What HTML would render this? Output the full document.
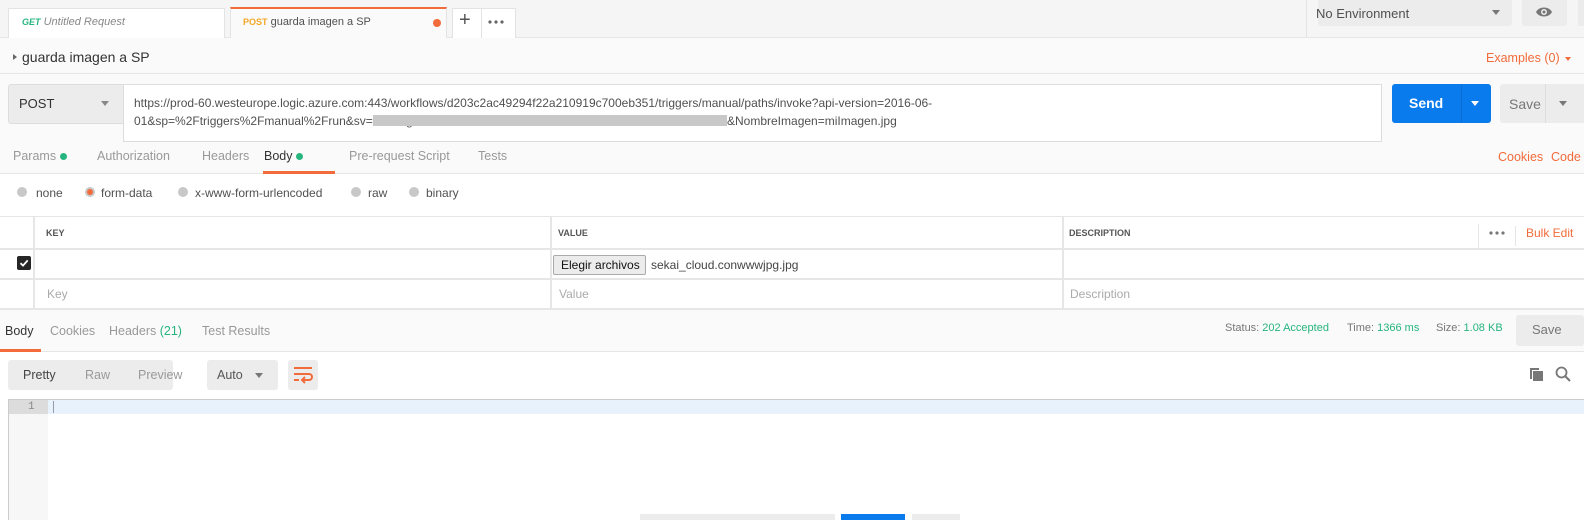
<!DOCTYPE html>
<html><head><meta charset="utf-8"><style>
*{box-sizing:border-box;margin:0;padding:0}
body{width:1584px;height:520px;overflow:hidden;background:#fff;font-family:"Liberation Sans",sans-serif;font-size:12px;color:#505050;position:relative}
.a{position:absolute;white-space:nowrap}
.or{color:#f26b3a}
.gr{color:#26b47f}
.lt{color:#999}
</style></head><body>
<div class="a" style="left:0;top:0;width:1584px;height:38px;background:#f5f5f5;border-bottom:1px solid #e6e6e6"></div>
<div class="a" style="left:8px;top:8px;width:217px;height:30px;background:#fff;border:1px solid #e3e3e3;border-bottom:none"></div>
<div class="a" style="left:22px;top:16px;font-size:11px;font-style:italic"><b class="gr" style="font-size:9px">GET</b> <span style="color:#888">Untitled Request</span></div>
<div class="a" style="left:230px;top:7px;width:217px;height:32px;background:#fafafa;border:1px solid #e3e3e3;border-top:2px solid #f26b3a;border-bottom:none"></div>
<div class="a" style="left:243px;top:16px;font-size:11px"><b style="color:#f4a724;font-size:9px">POST</b> <span style="color:#505050">guarda imagen a SP</span></div>
<div class="a" style="left:433px;top:19px;width:8px;height:8px;border-radius:50%;background:#f26b3a"></div>
<div class="a" style="left:452px;top:8px;width:64px;height:30px;background:#fff;border:1px solid #e3e3e3;border-bottom:none"></div>
<div class="a" style="left:481px;top:8px;width:1px;height:30px;background:#e3e3e3"></div>
<div class="a" style="left:459px;top:9px;font-size:20px;color:#555">+</div>
<svg class="a" style="left:488px;top:20px" width="16" height="4"><circle cx="2" cy="2" r="1.6" fill="#666"/><circle cx="8" cy="2" r="1.6" fill="#666"/><circle cx="14" cy="2" r="1.6" fill="#666"/></svg>
<div class="a" style="left:1306px;top:0;width:1px;height:37px;background:#e3e3e3"></div>
<div class="a" style="left:1318px;top:0;width:194px;height:26px;background:#ececec;border-radius:0 0 3px 3px"></div>
<div class="a" style="left:1316px;top:6px;font-size:13px;color:#505050">No Environment</div>
<div class="a" style="left:1492px;top:10px;border:4px solid transparent;border-top:5px solid #777"></div>
<div class="a" style="left:1522px;top:0;width:45px;height:26px;background:#ececec;border-radius:0 0 3px 3px"></div>
<svg class="a" style="left:1535px;top:5px" width="18" height="14" viewBox="0 0 18 14"><path d="M1 7C4 1 14 1 17 7C14 13 4 13 1 7Z" fill="#777"/><circle cx="9" cy="7" r="3" fill="#ececec"/><circle cx="9" cy="7" r="1.5" fill="#777"/></svg>
<div class="a" style="left:1578px;top:0;width:6px;height:26px;background:#ececec"></div>
<div class="a" style="left:0;top:38px;width:1584px;height:36px;background:#fafafa;border-bottom:1px solid #e6e6e6"></div>
<div class="a" style="left:13px;top:54px;border:3px solid transparent;border-left:4px solid #666"></div>
<div class="a" style="left:22px;top:49px;font-size:14px;color:#333">guarda imagen a SP</div>
<div class="a or" style="left:1486px;top:51px;font-size:12.5px">Examples (0)</div>
<div class="a" style="left:1565px;top:57px;border:3px solid transparent;border-top:4px solid #f26b3a"></div>
<div class="a" style="left:0;top:74px;width:1584px;height:68px;background:#fafafa"></div>
<div class="a" style="left:8px;top:84px;width:116px;height:40px;background:#ececec;border:1px solid #ddd;border-radius:3px 0 0 3px"></div>
<div class="a" style="left:19px;top:96px;font-size:13px;color:#333">POST</div>
<div class="a" style="left:101px;top:101px;border:4px solid transparent;border-top:5px solid #888"></div>
<div class="a" style="left:123px;top:84px;width:1259px;height:58px;background:#fff;border:1px solid #ddd"></div>
<div class="a" style="left:134px;top:96px;font-size:12px;color:#505050">https://prod-60.westeurope.logic.azure.com:443/workflows/d203c2ac49294f22a210919c700eb351/triggers/manual/paths/invoke?api-version=2016-06-</div>
<div class="a" style="left:134px;top:114px;font-size:12px;color:#505050">01&amp;sp=%2Ftriggers%2Fmanual%2Frun&amp;sv=1.0&amp;sig=</div>
<div class="a" style="left:373px;top:115px;width:354px;height:11px;background:#c8c8c8"></div>
<div class="a" style="left:727px;top:114px;font-size:12px;color:#505050">&amp;NombreImagen=miImagen.jpg</div>
<div class="a" style="left:1392px;top:84px;width:99px;height:39px;background:#097bed;border-radius:3px"></div>
<div class="a" style="left:1461px;top:84px;width:1px;height:39px;background:#0a6ed4"></div>
<div class="a" style="left:1409px;top:95px;font-size:14px;font-weight:bold;color:#fff">Send</div>
<div class="a" style="left:1471px;top:101px;border:4px solid transparent;border-top:5px solid #fff"></div>
<div class="a" style="left:1500px;top:84px;width:84px;height:39px;background:#ececec;border-radius:3px 0 0 3px"></div>
<div class="a" style="left:1545px;top:84px;width:1px;height:39px;background:#ddd"></div>
<div class="a" style="left:1509px;top:96px;font-size:14px;color:#777">Save</div>
<div class="a" style="left:1559px;top:101px;border:4px solid transparent;border-top:5px solid #777"></div>
<div class="a" style="left:0;top:142px;width:1584px;height:32px;background:#fafafa;border-bottom:1px solid #e6e6e6"></div>
<div class="a lt" style="left:13px;top:149px;font-size:12.5px">Params <span style="display:inline-block;width:7px;height:7px;border-radius:50%;background:#26b47f"></span></div>
<div class="a lt" style="left:97px;top:149px;font-size:12.5px">Authorization</div>
<div class="a lt" style="left:202px;top:149px;font-size:12.5px">Headers</div>
<div class="a" style="left:264px;top:149px;font-size:12.5px;color:#333">Body <span style="display:inline-block;width:7px;height:7px;border-radius:50%;background:#26b47f"></span></div>
<div class="a" style="left:263px;top:171px;width:72px;height:3px;background:#f26b3a"></div>
<div class="a lt" style="left:349px;top:149px;font-size:12.5px">Pre-request Script</div>
<div class="a lt" style="left:478px;top:149px;font-size:12.5px">Tests</div>
<div class="a or" style="left:1498px;top:150px;font-size:12.5px">Cookies</div>
<div class="a or" style="left:1551px;top:150px;font-size:12.5px">Code</div>
<div class="a" style="left:17px;top:187px;width:10px;height:10px;border-radius:50%;background:#c8c8c8"></div>
<div class="a" style="left:36px;top:186px;font-size:12px">none</div>
<div class="a" style="left:85px;top:187px;width:10px;height:10px;border-radius:50%;background:#f26b3a;border:2px solid #c8c8c8"></div>
<div class="a" style="left:101px;top:186px;font-size:12px">form-data</div>
<div class="a" style="left:178px;top:187px;width:10px;height:10px;border-radius:50%;background:#c8c8c8"></div>
<div class="a" style="left:195px;top:186px;font-size:12px">x-www-form-urlencoded</div>
<div class="a" style="left:351px;top:187px;width:10px;height:10px;border-radius:50%;background:#c8c8c8"></div>
<div class="a" style="left:368px;top:186px;font-size:12px">raw</div>
<div class="a" style="left:409px;top:187px;width:10px;height:10px;border-radius:50%;background:#c8c8c8"></div>
<div class="a" style="left:426px;top:186px;font-size:12px">binary</div>
<div class="a" style="left:0;top:216px;width:1584px;height:1px;background:#e6e6e6"></div>
<div class="a" style="left:0;top:248px;width:1584px;height:2px;background:#e6e6e6"></div>
<div class="a" style="left:0;top:278px;width:1584px;height:2px;background:#e6e6e6"></div>
<div class="a" style="left:0;top:308px;width:1584px;height:2px;background:#e6e6e6"></div>
<div class="a" style="left:33px;top:216px;width:2px;height:93px;background:#e6e6e6"></div>
<div class="a" style="left:550px;top:216px;width:2px;height:93px;background:#e6e6e6"></div>
<div class="a" style="left:1062px;top:216px;width:2px;height:93px;background:#e6e6e6"></div>
<div class="a" style="left:1478px;top:224px;width:1px;height:24px;background:#e6e6e6"></div>
<div class="a" style="left:1515px;top:226px;width:1px;height:20px;background:#e6e6e6"></div>
<div class="a" style="left:46px;top:228px;font-size:9px;font-weight:bold;color:#555">KEY</div>
<div class="a" style="left:558px;top:228px;font-size:9px;font-weight:bold;color:#555">VALUE</div>
<div class="a" style="left:1069px;top:228px;font-size:9px;font-weight:bold;color:#555">DESCRIPTION</div>
<svg class="a" style="left:1489px;top:231px" width="16" height="4"><circle cx="2" cy="2" r="1.6" fill="#777"/><circle cx="8" cy="2" r="1.6" fill="#777"/><circle cx="14" cy="2" r="1.6" fill="#777"/></svg>
<div class="a or" style="left:1526px;top:226px;font-size:12px">Bulk Edit</div>
<div class="a" style="left:17px;top:256px;width:14px;height:14px;background:#262626;border-radius:2px"></div>
<svg class="a" style="left:19px;top:258px" width="10" height="10" viewBox="0 0 10 10"><path d="M1.5 5.2L4 7.6L8.7 2.4" stroke="#fff" stroke-width="1.8" fill="none"/></svg>
<div class="a" style="left:553px;top:255px;width:93px;height:20px;background:#ececec;border:1px solid #aaa;border-radius:2px;font-size:12px;color:#111;padding:2px 0 0 7px">Elegir archivos</div>
<div class="a" style="left:651px;top:258px;font-size:12px;color:#444">sekai_cloud.conwwwjpg.jpg</div>
<div class="a" style="left:47px;top:287px;font-size:12px;color:#aaa">Key</div>
<div class="a" style="left:559px;top:287px;font-size:12px;color:#aaa">Value</div>
<div class="a" style="left:1070px;top:287px;font-size:12px;color:#aaa">Description</div>
<div class="a" style="left:0;top:310px;width:1584px;height:42px;background:#fafafa;border-bottom:1px solid #e6e6e6"></div>
<div class="a" style="left:5px;top:324px;font-size:12.5px;color:#333">Body</div>
<div class="a" style="left:0;top:349px;width:41px;height:3px;background:#f26b3a"></div>
<div class="a lt" style="left:50px;top:324px;font-size:12.5px">Cookies</div>
<div class="a lt" style="left:109px;top:324px;font-size:12.5px">Headers <span class="gr">(21)</span></div>
<div class="a lt" style="left:202px;top:324px;font-size:12.5px">Test Results</div>
<div class="a" style="left:1225px;top:322px;font-size:11px;color:#777">Status: <span class="gr">202 Accepted</span></div>
<div class="a" style="left:1347px;top:322px;font-size:11px;color:#777">Time: <span class="gr">1366 ms</span></div>
<div class="a" style="left:1436px;top:322px;font-size:11px;color:#777">Size: <span class="gr">1.08 KB</span></div>
<div class="a" style="left:1520px;top:320px;width:1px;height:24px;background:#ddd"></div>
<div class="a" style="left:1516px;top:315px;width:68px;height:31px;background:#ececec;border-radius:3px"></div>
<div class="a" style="left:1532px;top:322px;font-size:13px;color:#777">Save</div>
<div class="a" style="left:8px;top:360px;width:165px;height:30px;background:#ececec;border-radius:3px"></div>
<div class="a" style="left:23px;top:368px;font-size:12.5px;color:#444">Pretty</div>
<div class="a lt" style="left:85px;top:368px;font-size:12.5px">Raw</div>
<div class="a lt" style="left:138px;top:368px;font-size:12.5px">Preview</div>
<div class="a" style="left:207px;top:360px;width:71px;height:30px;background:#ececec;border-radius:3px"></div>
<div class="a" style="left:217px;top:368px;font-size:12.5px;color:#555">Auto</div>
<div class="a" style="left:255px;top:373px;border:4px solid transparent;border-top:5px solid #777"></div>
<div class="a" style="left:288px;top:360px;width:30px;height:30px;background:#ececec;border-radius:3px"></div>
<svg class="a" style="left:293px;top:366px" width="20" height="18" viewBox="0 0 20 18"><path d="M1 2H19M1 8H16A3 3 0 0 1 16 14H10M1 14H6" stroke="#f26b3a" stroke-width="2" fill="none"/><path d="M12 11L9 14L12 17" stroke="#f26b3a" stroke-width="2" fill="none"/></svg>
<svg class="a" style="left:1529px;top:367px" width="16" height="16" viewBox="0 0 16 16"><path d="M1 1H10V3H3V12H1Z" fill="#777"/><rect x="4" y="4" width="10" height="10" fill="#777"/></svg>
<svg class="a" style="left:1555px;top:366px" width="16" height="16" viewBox="0 0 16 16"><circle cx="6.5" cy="6.5" r="5" stroke="#777" stroke-width="1.8" fill="none"/><path d="M10 10L15 15" stroke="#777" stroke-width="2"/></svg>
<div class="a" style="left:8px;top:399px;width:1576px;height:1px;background:#ccc"></div>
<div class="a" style="left:8px;top:400px;width:1px;height:120px;background:#ccc"></div>
<div class="a" style="left:9px;top:400px;width:39px;height:120px;background:#f7f7f7"></div>
<div class="a" style="left:9px;top:400px;width:39px;height:14px;background:#dcdcdc"></div>
<div class="a" style="left:28px;top:401px;font-family:'Liberation Mono',monospace;font-size:11px;color:#888">1</div>
<div class="a" style="left:48px;top:400px;width:1536px;height:14px;background:#e8f2fd"></div>
<div class="a" style="left:53px;top:401px;width:1px;height:12px;background:#99a"></div>
<div class="a" style="left:640px;top:514px;width:195px;height:6px;background:#ececec"></div>
<div class="a" style="left:841px;top:514px;width:64px;height:6px;background:#097bed"></div>
<div class="a" style="left:912px;top:514px;width:48px;height:6px;background:#ececec"></div>
</body></html>
